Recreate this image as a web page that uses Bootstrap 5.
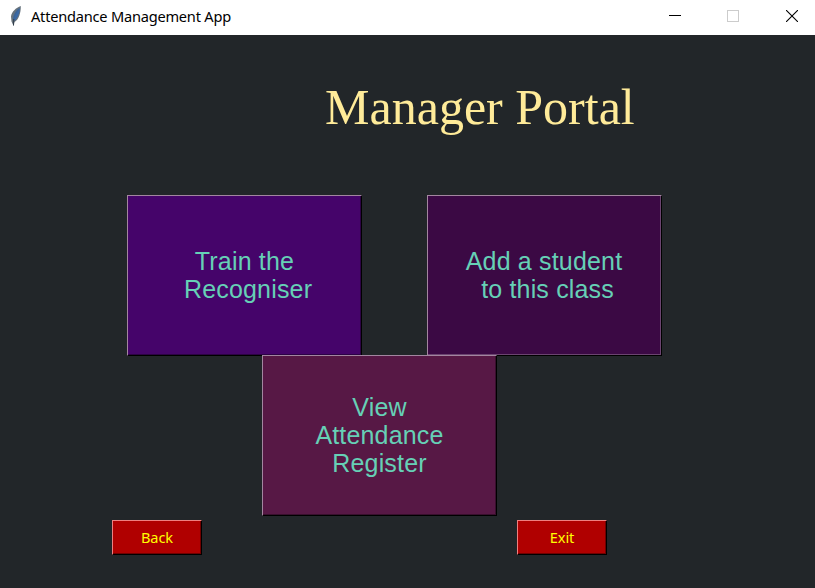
<!DOCTYPE html>
<html lang="en">
<head>
<meta charset="utf-8">
<title>Attendance Management App</title>
<link href="https://cdn.jsdelivr.net/npm/bootstrap@5.3.0/dist/css/bootstrap.min.css" rel="stylesheet">
<style>
body{background:#222629;height:588px;overflow:hidden}
.titlebar{height:35px;background:#fff;color:#000;font-family:"Noto Sans","Open Sans",sans-serif}
.app-name{font-size:14.6px;line-height:20px;letter-spacing:-.22px;margin:0 0 4px 9px;white-space:nowrap}
.feather{margin:0 0 3px 9px}
.controls{gap:46px;margin:0 17px 3px 0}
.close-icon{margin-left:1px}
.heading{font:50px/58px "Liberation Serif",serif;color:#ffeb99;letter-spacing:.01px;margin:43px 0 0 325px;white-space:nowrap}
.tk{border-radius:0;padding:0 0 2px;border:1px solid #000;border-top-color:var(--hi);border-left-color:var(--hi);background:var(--bg);box-shadow:inset -1px -1px var(--lo);white-space:pre}
.tk:hover{background:var(--bg)}
.tile{--hi:#a386a0;width:235px;height:161px;font:25px/28px "Liberation Sans",Arial,sans-serif;color:#66d0b6;letter-spacing:.17px}
.tile:hover{color:#66d0b6}
.train{--bg:#45046a;--lo:#2c0344}
.add{--bg:#3b0944;--lo:#6b4470;padding-right:1px}
.view{--bg:#571845;--lo:#38102d}
.tiles{gap:65px;margin:59px 0 0 127px}
.register{margin:-1px 0 0 262px}
.small-btn{--bg:#b00000;--hi:#ee8080;--lo:#700000;width:90px;height:35px;font:14.6px/20px "Noto Sans","Open Sans",sans-serif;letter-spacing:-.1px;color:#ff0}
.small-btn:hover{color:#ff0}
.actions{gap:315px;margin:4px 0 0 112px}
</style>
</head>
<body>
<header class="titlebar d-flex align-items-center">
  <svg class="feather" width="13" height="20" viewBox="0 0 13 20" aria-hidden="true">
    <path d="M11.800 0C7 1.500 2.500 6 2 10.500L2.500 15.500 4.500 19.800 5.500 16C9.500 14 12 7 11.800 0Z" fill="#66727c"/>
    <path d="M10.800 2C7 4 4.500 8 3.800 13L5.500 14.800C8.800 12 10.800 7 10.800 2Z" fill="#3a69a6"/>
    <path d="M4.800 13 4.500 19.500" fill="none" stroke="#303c48" stroke-width="1"/>
    <path d="M9.500 3.500C6.500 7 5.200 10 4.800 13" fill="none" stroke="#416287" stroke-width=".7"/>
  </svg>
  <span class="app-name">Attendance Management App</span>
  <div class="controls d-flex align-items-center ms-auto">
    <svg width="12" height="12" shape-rendering="crispEdges"><path d="M0 5.500H12" stroke="#000"/></svg>
    <svg width="12" height="12" shape-rendering="crispEdges"><path d="M.5.5H11.500V11.500H.5Z" fill="none" stroke="#ccc"/></svg>
    <svg class="close-icon" width="12" height="12"><path d="M0 0 12 12M12 0 0 12" stroke="#000" stroke-width="1.1"/></svg>
  </div>
</header>
<main>
  <h1 class="heading">Manager Portal</h1>
  <div class="tiles d-flex">
    <button class="btn tk tile train">Train the
 Recogniser</button>
    <button class="btn tk tile add">Add a student
 to this class</button>
  </div>
  <div class="register d-flex"><button class="btn tk tile view position-relative">View
Attendance
Register</button></div>
  <div class="actions d-flex">
    <button class="btn tk small-btn">Back</button>
    <button class="btn tk small-btn">Exit</button>
  </div>
</main>
<script src="https://cdn.jsdelivr.net/npm/bootstrap@5.3.0/dist/js/bootstrap.bundle.min.js"></script>
</body>
</html>
